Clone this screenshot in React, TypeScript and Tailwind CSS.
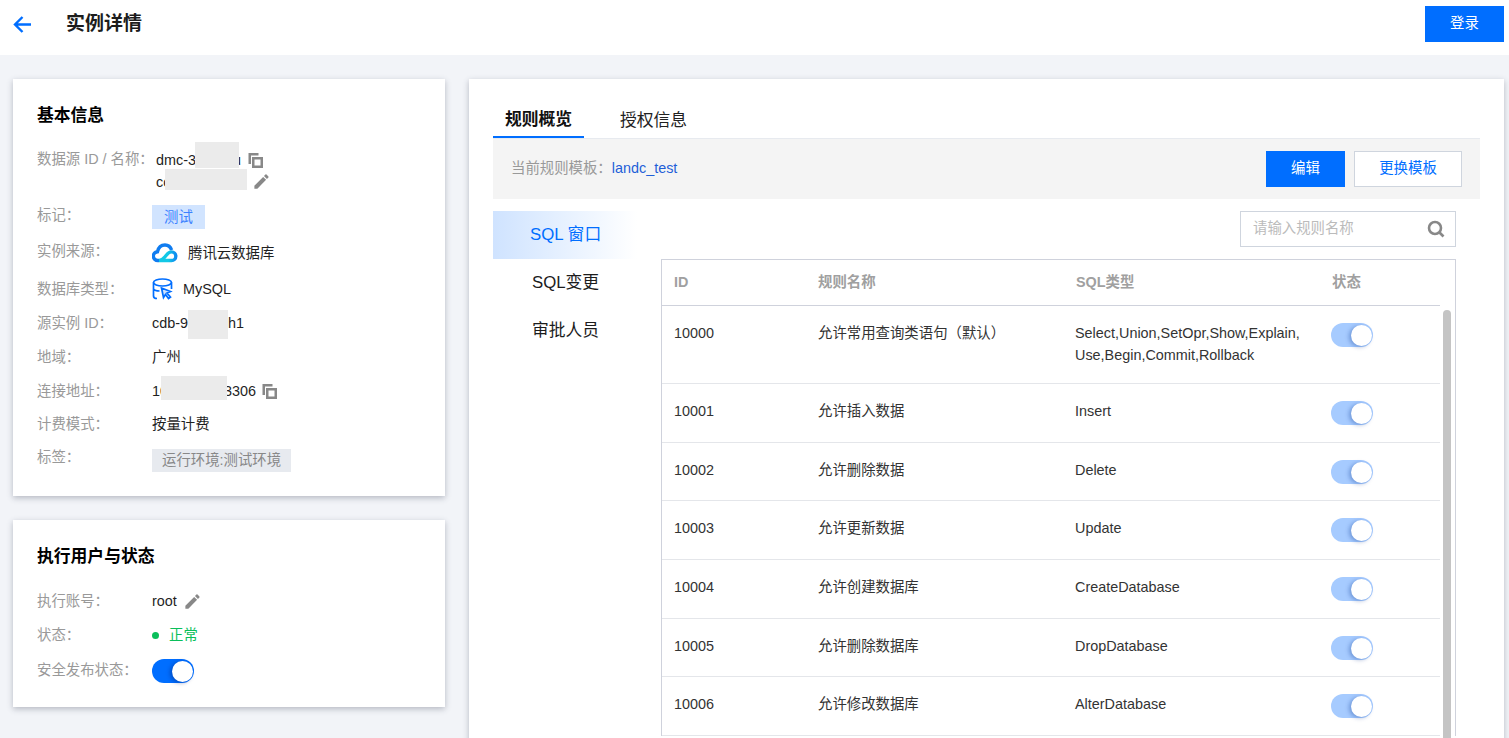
import type { ReactNode } from 'react';

const baseFont = "font-['Liberation_Sans','Noto_Sans_CJK_SC',sans-serif]";

function CopyIcon() {
  return (
    <svg width="15" height="15" viewBox="0 0 15 15" className="shrink-0">
      <path d="M0.500 0h10v2.500H3V11H0.500z" fill="#888" />
      <path d="M5.250 5.250h8.500v8.500h-8.500z" fill="none" stroke="#888" strokeWidth="2.500" />
    </svg>
  );
}

function PencilIcon() {
  return (
    <svg width="19" height="19" viewBox="0 0 24 24" className="shrink-0">
      <path d="M3 17.250V21h3.750L17.810 9.940l-3.750-3.750L3 17.250zM20.710 7.040a1 1 0 0 0 0-1.410l-2.340-2.340a1 1 0 0 0-1.410 0l-1.830 1.830 3.750 3.750 1.830-1.830z" fill="#888" />
    </svg>
  );
}

// hidden part of a value: takes its width in the line, the patch lies over the text around it
function Masked({ width, className }: { width: string; className: string }) {
  return (
    <span className={`relative h-[22px] shrink-0 ${width}`}>
      <span className={`absolute bg-[#ebebeb] ${className}`} />
    </span>
  );
}

function Toggle({ soft }: { soft?: boolean }) {
  return (
    <span className={`flex h-6 w-[42px] items-center justify-end rounded-full pr-[1px] ${soft ? 'bg-[#a6cbff]' : 'bg-[#006eff]'}`}>
      <span className={`h-[21px] w-[21px] rounded-full bg-white ${soft ? 'shadow-[-2px_1px_4px_rgba(0,50,140,0.35)]' : 'shadow-[-2px_1px_4px_rgba(0,30,110,0.4)]'}`} />
    </span>
  );
}

function InfoRow({ label, children, className = '', valueClass = '' }: { label: string; children: ReactNode; className?: string; valueClass?: string }) {
  return (
    <div className={`flex text-[14.4px] leading-[22px] ${className}`}>
      <span className="w-[115px] shrink-0 text-[#999]">{label}</span>
      <div className={`flex min-w-0 items-center text-[#1f1f1f] ${valueClass}`}>{children}</div>
    </div>
  );
}

const rules = [
  { id: '10000', name: '允许常用查询类语句（默认）', type: ['Select,Union,SetOpr,Show,Explain,', 'Use,Begin,Commit,Rollback'], h: 'h-[78px]' },
  { id: '10001', name: '允许插入数据', type: ['Insert'], h: 'h-[59px]' },
  { id: '10002', name: '允许删除数据', type: ['Delete'], h: 'h-[58px]' },
  { id: '10003', name: '允许更新数据', type: ['Update'], h: 'h-[59px]' },
  { id: '10004', name: '允许创建数据库', type: ['CreateDatabase'], h: 'h-[59px]' },
  { id: '10005', name: '允许删除数据库', type: ['DropDatabase'], h: 'h-[58px]' },
  { id: '10006', name: '允许修改数据库', type: ['AlterDatabase'], h: 'h-[59px]' },
];

export default function App() {
  return (
    <div className={`flex h-[738px] w-[1509px] flex-col overflow-hidden bg-[#f2f4f8] ${baseFont}`}>
      <header className="flex h-[55px] shrink-0 items-start justify-between bg-white pr-[5px]">
        <div className="flex h-[48px] items-center">
          <svg width="18" height="17" viewBox="0 0 18 17" className="ml-[13px]" fill="none" stroke="#006eff" strokeWidth="2.400">
            <path d="M18 8.500H2.500M9.500 1 2 8.500 9.500 16" />
          </svg>
          <h1 className="ml-[35px] text-[19px] font-bold text-[#1c1c1c]">实例详情</h1>
        </div>
        <button className="mt-[6px] h-[36px] w-[79px] bg-[#006eff] text-[14.4px] text-white">登录</button>
      </header>

      <main className="flex min-h-0 flex-1 items-start gap-6 pl-[13px] pt-6">
        <div className="flex w-[432px] shrink-0 flex-col gap-6">
          <section className="h-[417px] bg-white px-6 pt-[25px] shadow-[0_2px_6px_rgba(54,58,80,0.32)]">
            <h2 className="text-[16.8px] font-bold leading-6 text-black">基本信息</h2>
            <div className="mt-[21px] flex text-[14.4px] leading-[21px]">
              <span className="w-[119px] shrink-0 text-[#999]">数据源 ID / 名称：</span>
              <div className="text-[#1f1f1f]">
                <div className="flex items-center">
                  <span>dmc-3</span>
                  <Masked width="w-[37px]" className="left-[-1px] top-[-7px] h-[26px] w-[44px]" />
                  <span>u</span>
                  <span className="ml-[7px]"><CopyIcon /></span>
                </div>
                <div className="flex items-center">
                  <span>co</span>
                  <Masked width="w-[76px]" className="left-[-6px] top-[-2px] h-[21px] w-[82px]" />
                  <span className="ml-[5px] -mt-px"><PencilIcon /></span>
                </div>
              </div>
            </div>
            <InfoRow label="标记：" className="mt-[11px]" valueClass="mt-px">
              <span className="bg-[#d1e4ff] px-3 leading-6 text-[#3c82ff]">测试</span>
            </InfoRow>
            <InfoRow label="实例来源：" className="mt-[11px]" valueClass="mt-[2px]">
              <svg width="26" height="20" viewBox="0 0 26 20" fill="none" className="shrink-0">
                <defs>
                  <linearGradient id="cloudLow" x1="0" y1="0" x2="1" y2="0">
                    <stop offset="0" stopColor="#12c8e6" />
                    <stop offset="0.55" stopColor="#12c8e6" />
                    <stop offset="1" stopColor="#0f8cf0" />
                  </linearGradient>
                </defs>
                <path d="M7 17.500H6A4.400 4.400 0 0 1 5.500 8.700C6.500 4.200 9.500 2 13 2c3.200 0 5.500 1.800 6.600 5" stroke="#0f7cf0" strokeWidth="3.400" />
                <path d="M7 17.500h12.500a4.300 4.300 0 0 0 0-8.600c-3 0-4.400 2.400-6.300 4.600-1.600 1.900-3 4-6.200 4z" stroke="url(#cloudLow)" strokeWidth="3.400" />
              </svg>
              <span className="ml-[10px]">腾讯云数据库</span>
            </InfoRow>
            <InfoRow label="数据库类型：" className="mt-[14px]">
              <svg width="21" height="22" viewBox="0 0 21 22" fill="none" stroke="#006eff" strokeWidth="1.700" className="shrink-0">
                <ellipse cx="10.500" cy="4.500" rx="9" ry="3.500" />
                <path d="M1.500 4.500V18c0 1.500 1.500 2.500 3.500 2.500M19.500 4.500V11M1.500 11c1 1.500 4 2 6 2" />
                <path d="m9.500 10 9 3.500-3.500 1.500 3.500 4-2 1.500-3-4-2 3z" fill="#cfe3ff" />
              </svg>
              <span className="ml-[10px]">MySQL</span>
            </InfoRow>
            <InfoRow label="源实例 ID：" className="mt-[12px]">
              <span>cdb-9</span>
              <Masked width="w-[40px]" className="left-0 top-[-2px] h-[29px] w-[40px]" />
              <span>h1</span>
            </InfoRow>
            <InfoRow label="地域：" className="mt-[12px]">广州</InfoRow>
            <InfoRow label="连接地址：" className="mt-[12px]">
              <span>10</span>
              <Masked width="w-[56px]" className="left-[-7px] top-[-4px] h-[24px] w-[66px]" />
              <span>3306</span>
              <span className="ml-[6px]"><CopyIcon /></span>
            </InfoRow>
            <InfoRow label="计费模式：" className="mt-[11px]">按量计费</InfoRow>
            <InfoRow label="标签：" className="mt-[11px]" valueClass="mt-[3px]">
              <span className="bg-[#e7eaef] px-[10px] leading-[23px] text-[#888]">运行环境:测试环境</span>
            </InfoRow>
          </section>

          <section className="h-[187px] bg-white px-6 pt-[25px] shadow-[0_2px_6px_rgba(54,58,80,0.32)]">
            <h2 className="text-[16.8px] font-bold leading-6 text-black">执行用户与状态</h2>
            <InfoRow label="执行账号：" className="mt-[21px]">
              <span>root</span>
              <span className="ml-[6px]"><PencilIcon /></span>
            </InfoRow>
            <InfoRow label="状态：" className="mt-[12px]">
              <span className="h-[7px] w-[7px] rounded-full bg-[#0abf5b]" />
              <span className="ml-[10px] text-[#0abf5b]">正常</span>
            </InfoRow>
            <InfoRow label="安全发布状态：" className="mt-[13px]">
              <Toggle />
            </InfoRow>
          </section>
        </div>

        <section className="h-[800px] w-[1035px] shrink-0 bg-white pl-6 pt-[24px] shadow-[0_2px_6px_rgba(54,58,80,0.32)]">
          <div className="flex h-[35px] w-[987px] text-[16.8px]">
            <span className="flex w-[91px] items-center justify-center border-b-2 border-[#006eff] pt-px font-bold text-[#111]">规则概览</span>
            <span className="ml-[36px] flex items-center pt-px text-[#222]">授权信息</span>
          </div>
          <div className="flex h-[61px] w-[987px] items-center justify-between border-t border-[#e7eaef] bg-[#f4f4f4] px-[18px] text-[14.4px]">
            <span className="text-[#999]">当前规则模板：<span className="text-[#1f5fd8]">landc_test</span></span>
            <div className="flex gap-[9px]">
              <button className="h-[36px] w-[79px] bg-[#006eff] text-white">编辑</button>
              <button className="h-[36px] w-[108px] border border-[#cfd5de] bg-white text-[#006eff]">更换模板</button>
            </div>
          </div>

          <div className="flex w-[963px]">
            <nav className="w-[168px] shrink-0 pt-3 text-[16.8px]">
              <div className="flex h-12 w-[144px] items-center bg-gradient-to-r from-[#cfe3ff] to-white pl-[37px] text-[#006eff]">SQL 窗口</div>
              <div className="flex h-12 items-center pl-[39px] text-[#1c1c1c]">SQL变更</div>
              <div className="flex h-12 items-center pl-[39px] text-[#1c1c1c]">审批人员</div>
            </nav>

            <div className="w-[795px]">
              <div className="mt-3 flex justify-end">
                <div className="flex h-[36px] w-[216px] items-center justify-between border border-[#cfd5de] pl-3 pr-[10px]">
                  <span className="text-[14.4px] text-[#bbb]">请输入规则名称</span>
                  <svg width="18" height="18" viewBox="0 0 18 18" fill="none" stroke="#888" strokeWidth="2.600">
                    <circle cx="8" cy="8" r="6" />
                    <path d="m12.500 12.500 4 4" />
                  </svg>
                </div>
              </div>

              <div className="relative mt-3 w-[795px] border border-b-0 border-[#cfd2dc] text-[14.4px] text-[#333]">
                <div className="flex h-[46px] w-[778px] items-center border-b border-[#cfd2dc] pl-3 font-bold text-[#a0a0a0]">
                  <span className="w-[144px]">ID</span>
                  <span className="w-[258px]">规则名称</span>
                  <span className="w-[256px]">SQL类型</span>
                  <span>状态</span>
                </div>
                {rules.map((r) => (
                  <div key={r.id} className={`flex w-[778px] items-start border-b border-[#e4e6ea] pl-3 pt-[16px] leading-[22px] ${r.h}`}>
                    <span className="w-[144px]">{r.id}</span>
                    <span className="w-[257px]">{r.name}</span>
                    <span className="w-[256px]">
                      {r.type.map((t) => (
                        <span key={t} className="block">{t}</span>
                      ))}
                    </span>
                    <span className="mt-px"><Toggle soft /></span>
                  </div>
                ))}
                <span className="absolute right-[4px] top-[50px] h-[500px] w-2 rounded-full bg-[#c4c4c4]" />
              </div>
            </div>
          </div>
        </section>
      </main>
    </div>
  );
}
